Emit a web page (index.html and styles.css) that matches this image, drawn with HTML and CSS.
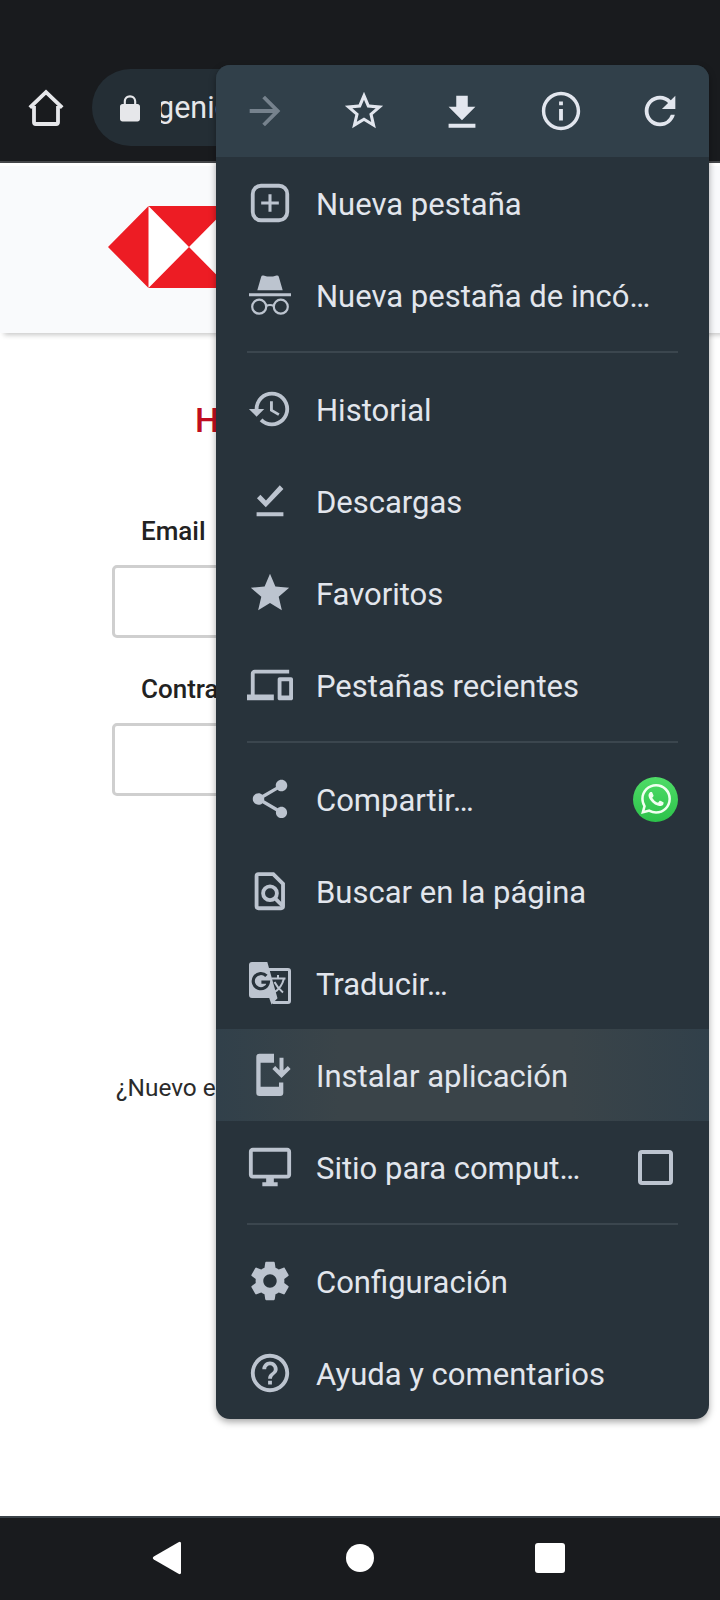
FILE: index.html
```html
<!DOCTYPE html>
<html lang="es">
<head>
<meta charset="utf-8">
<title>Menú del navegador</title>
<link rel="stylesheet" href="styles.css">
</head>
<body>
<div class="screen">
  <header class="toolbar">
    <svg class="home" viewBox="0 0 36 38"><path d="M1.8 18.6 18 3.2l16.200 15.400M6 17v16.200q0 1.800 1.800 1.800h20.400q1.800 0 1.800-1.800V17" fill="none" stroke="currentColor" stroke-width="3.800"/></svg>
    <div class="omnibox">
      <svg class="lock" viewBox="0 0 24 24"><path d="M18 8h-1V6c0-2.760-2.240-5-5-5S7 3.240 7 6v2H6c-1.100 0-2 .9-2 2v10c0 1.100.9 2 2 2h12c1.100 0 2-.9 2-2V10c0-1.100-.9-2-2-2zM8.700 8V6a3.300 3.300 0 0 1 6.600 0v2z"/></svg>
      <div class="url"><span>genic</span></div>
    </div>
  </header>
  <main class="page">
    <div class="brand">
      <svg class="logo" viewBox="0 0 162 82"><path fill="#fff" d="M40.500 0h81v82h-81z"/><path fill="#ed1c24" d="M40.500 0v82L0 41zM121.500 0v82L162 41zM40.500 0h81L81 41zM40.500 82h81L81 41z"/></svg>
    </div>
    <h1 class="title">H</h1>
    <form class="login">
      <label class="label">Email</label>
      <div class="field"></div>
      <label class="label">Contra</label>
      <div class="field"></div>
    </form>
    <p class="signup">¿Nuevo e</p>
  </main>
  <nav class="sysnav">
    <svg class="sys" viewBox="0 0 32 36"><path fill="#fff" d="M2.800 16.500 27.500 2.300Q30 1 30 3.500v29q0 2.500-2.500 1.200L2.800 19.500q-2-1.500 0-3z"/></svg>
    <span class="sys-home"></span>
    <span class="sys-recent"></span>
  </nav>

  <div class="menu">
    <div class="actions">
      <svg class="ic dim" viewBox="0 0 24 24"><path d="m12 4-1.410 1.410L16.170 11H4v2h12.170l-5.580 5.590L12 20l8-8z"/></svg>
      <svg class="ic" viewBox="0 0 24 24"><path d="m22 9.240-7.190-.62L12 2 9.190 8.630 2 9.240l5.460 4.730L5.820 21 12 17.270 18.180 21l-1.630-7.030L22 9.240zM12 15.400l-3.760 2.270 1-4.280-3.320-2.880 4.380-.38L12 6.100l1.710 4.040 4.380.38-3.320 2.880 1 4.280L12 15.400z"/></svg>
      <svg class="ic" viewBox="0 0 24 24"><path d="M19 9.800h-4V4H9v5.800H5l7 7zM5 18.600v2.200h14v-2.200z"/></svg>
      <svg class="ic" viewBox="0 0 24 24"><path d="M11 7h2v2h-2zm0 4h2v6h-2zm1-9C6.480 2 2 6.480 2 12s4.480 10 10 10 10-4.480 10-10S17.520 2 12 2zm0 18.200c-4.500 0-8.200-3.700-8.200-8.200S7.500 3.800 12 3.800s8.200 3.700 8.200 8.200-3.700 8.200-8.200 8.200z"/></svg>
      <svg class="ic" viewBox="0 0 24 24"><path d="M17.650 6.350A7.958 7.958 0 0 0 12 4c-4.420 0-7.990 3.580-7.990 8s3.570 8 7.990 8c3.730 0 6.840-2.550 7.730-6h-2.080A5.990 5.990 0 0 1 12 18c-3.310 0-6-2.690-6-6s2.690-6 6-6c1.660 0 3.140.69 4.220 1.780L13 11h7V4l-2.350 2.350z"/></svg>
    </div>

    <div class="group">
      <div class="item">
        <svg class="ic" viewBox="0 0 24 24"><rect x="3" y="3" width="18" height="18" rx="4.300" fill="none" stroke="currentColor" stroke-width="2"/><path d="M11.200 7.400h1.600v3.800h3.800v1.600h-3.800v3.800h-1.600v-3.800H7.400v-1.600h3.800z"/></svg>
        <span class="text">Nueva pestaña</span>
      </div>
      <div class="item">
        <svg class="ic" viewBox="0 0 46 46"><path d="M10.300 18.200 14.200 4.700q.5-1.700 2.300-1.200l3.500.9h6l3.500-.9q1.800-.5 2.300 1.200l3.900 13.500zM2 21.300h42v2.900H2z"/><g fill="none" stroke="currentColor" stroke-width="2.200"><circle cx="12.200" cy="34.700" r="7"/><circle cx="33.800" cy="34.700" r="7"/><path d="M19 34q4-2 8 0"/></g></svg>
        <span class="text">Nueva pestaña de incó…</span>
      </div>
    </div>
    <div class="group">
      <div class="item">
        <svg class="ic" viewBox="0 0 24 24"><path d="M13 3a9 9 0 0 0-9 9H1l3.890 3.890.07.140L9 12H6c0-3.870 3.130-7 7-7s7 3.130 7 7-3.130 7-7 7c-1.930 0-3.680-.79-4.940-2.060l-1.420 1.420A8.954 8.954 0 0 0 13 21a9 9 0 0 0 0-18zm-1 5v5l4.280 2.540.72-1.210-3.500-2.080V8H12z"/></svg>
        <span class="text">Historial</span>
      </div>
      <div class="item">
        <svg class="ic" viewBox="0 0 24 24"><path d="M5.200 10.600 7 8.800l2.900 2.900L17.100 3.800l1.900 1.900L9.800 15.200zM5 17.900h14V20H5z"/></svg>
        <span class="text">Descargas</span>
      </div>
      <div class="item">
        <svg class="ic" viewBox="0 0 24 24"><path d="M12 17.270 18.180 21l-1.640-7.030L22 9.240l-7.190-.61L12 2 9.190 8.630 2 9.240l5.460 4.730L5.820 21z"/></svg>
        <span class="text">Favoritos</span>
      </div>
      <div class="item">
        <svg class="ic" viewBox="0 0 24 24"><path d="M4 6h18V4H4c-1.100 0-2 .9-2 2v11H0v3h14v-3H4V6zm19 2h-6c-.55 0-1 .45-1 1v10c0 .55.45 1 1 1h6c.55 0 1-.45 1-1V9c0-.55-.45-1-1-1zm-1 9.500h-4V10h4v7.500z"/></svg>
        <span class="text">Pestañas recientes</span>
      </div>
    </div>
    <div class="group">
      <div class="item">
        <svg class="ic" viewBox="0 0 24 24"><path d="M18 16.080c-.76 0-1.440.3-1.960.77L8.910 12.700c.05-.23.09-.46.09-.7s-.04-.47-.09-.7l7.050-4.110c.54.5 1.250.81 2.040.81 1.660 0 3-1.340 3-3s-1.340-3-3-3-3 1.340-3 3c0 .24.04.47.09.7L8.040 9.810C7.500 9.310 6.790 9 6 9c-1.660 0-3 1.340-3 3s1.340 3 3 3c.79 0 1.500-.31 2.040-.81l7.120 4.160c-.05.21-.08.43-.08.65 0 1.610 1.310 2.920 2.920 2.920s2.920-1.310 2.920-2.920-1.310-2.920-2.920-2.920z"/></svg>
        <span class="text">Compartir…</span>
        <span class="whatsapp"><svg viewBox="0 0 24 24"><path d="M17.472 14.382c-.297-.149-1.758-.867-2.030-.967-.273-.099-.471-.148-.67.150-.197.297-.767.966-.94 1.164-.173.199-.347.223-.644.075-.297-.15-1.255-.463-2.390-1.475-.883-.788-1.480-1.761-1.653-2.059-.173-.297-.018-.458.130-.606.134-.133.298-.347.446-.52.149-.174.198-.298.298-.497.099-.198.050-.371-.025-.52-.075-.149-.669-1.612-.916-2.207-.242-.579-.487-.5-.669-.51-.173-.008-.371-.01-.57-.01-.198 0-.52.074-.792.372-.272.297-1.040 1.016-1.040 2.479 0 1.462 1.065 2.875 1.213 3.074.149.198 2.096 3.200 5.077 4.487.709.306 1.262.489 1.694.625.712.227 1.360.195 1.871.118.571-.085 1.758-.719 2.006-1.413.248-.694.248-1.289.173-1.413-.074-.124-.272-.198-.57-.347m-5.421 7.403h-.004a9.870 9.870 0 0 1-5.031-1.378l-.361-.214-3.741.982.998-3.648-.235-.374a9.860 9.860 0 0 1-1.510-5.260c.001-5.450 4.436-9.884 9.888-9.884 2.640 0 5.122 1.030 6.988 2.898a9.825 9.825 0 0 1 2.893 6.994c-.003 5.450-4.437 9.884-9.885 9.884m8.413-18.297A11.815 11.815 0 0 0 12.050 0C5.495 0 .16 5.335.157 11.892c0 2.096.547 4.142 1.588 5.945L.057 24l6.305-1.654a11.882 11.882 0 0 0 5.683 1.448h.005c6.554 0 11.890-5.335 11.893-11.893a11.821 11.821 0 0 0-3.480-8.413z"/></svg></span>
      </div>
      <div class="item">
        <svg class="ic" viewBox="0 0 24 24"><g fill="none" stroke="currentColor" stroke-width="2"><path d="M6 3.200h7.700L18.800 8.300v11.700q0 1-1 1H6q-1 0-1-1V4.200q0-1 1-1z"/><circle cx="12" cy="13.200" r="3.600"/><path d="m14.500 15.700 4 4"/></g></svg>
        <span class="text">Buscar en la página</span>
      </div>
      <div class="item">
        <svg class="ic" viewBox="0 0 46 46"><path d="M20 9.500h21q1.500 0 1.500 1.500v30q0 1.500-1.500 1.500H25.500" fill="none" stroke="currentColor" stroke-width="3"/><path d="M5 2h15.300l10.200 36.200-6 6.300-2.300-6.500H5q-3 0-3-3V5q0-3 3-3z"/><path d="M19.400 15.900a7.600 7.600 0 1 0 2 6.200h-7" fill="none" stroke="#28333b" stroke-width="3.200"/><path d="M24.500 18.500h14M31 15v3.500M37 18.500q-2.500 9.500-10 14M27.500 22q3 6 8.500 10.500" fill="none" stroke="currentColor" stroke-width="2"/></svg>
        <span class="text">Traducir…</span>
      </div>
      <div class="item pressed">
        <svg class="ic" viewBox="0 0 46 46"><path d="M27 1.700H12.500q-3.200 0-3.200 3.200v35.900q0 3.200 3.200 3.200h20.600q3.200 0 3.200-3.200V30.500H32v4.200H13.600V10.700H27z"/><path d="M34.500 5.700v17M26.800 15.500l7.700 7.700 7.700-7.700" fill="none" stroke="currentColor" stroke-width="4"/></svg>
        <span class="text">Instalar aplicación</span>
      </div>
      <div class="item">
        <svg class="ic" viewBox="0 0 24 24"><path d="M21 2H3c-1.100 0-2 .9-2 2v12c0 1.100.9 2 2 2h7v2H8v2h8v-2h-2v-2h7c1.100 0 2-.9 2-2V4c0-1.100-.9-2-2-2zm0 14H3V4h18v12z"/></svg>
        <span class="text">Sitio para comput…</span>
        <span class="checkbox"></span>
      </div>
    </div>
    <div class="group">
      <div class="item">
        <svg class="ic" viewBox="0 0 24 24"><path d="M19.430 12.980c.04-.32.07-.64.07-.98s-.03-.66-.07-.98l2.110-1.650c.19-.15.24-.42.12-.64l-2-3.460c-.12-.22-.39-.3-.61-.22l-2.490 1c-.52-.4-1.080-.73-1.690-.98l-.38-2.650C14.460 2.180 14.250 2 14 2h-4c-.25 0-.46.18-.49.42l-.38 2.650c-.61.25-1.170.59-1.690.98l-2.490-1c-.23-.09-.49 0-.61.22l-2 3.460c-.13.22-.07.49.12.64l2.110 1.650c-.04.32-.07.65-.07.98s.03.66.07.98l-2.110 1.650c-.19.15-.24.42-.12.64l2 3.460c.12.22.39.3.61.22l2.490-1c.52.4 1.080.73 1.690.98l.38 2.650c.03.24.24.42.49.42h4c.25 0 .46-.18.49-.42l.38-2.650c.61-.25 1.170-.59 1.690-.98l2.490 1c.23.09.49 0 .61-.22l2-3.460c.12-.22.07-.49-.12-.64l-2.110-1.650zM12 15.500c-1.930 0-3.500-1.570-3.500-3.500s1.570-3.500 3.500-3.500 3.500 1.570 3.500 3.500-1.570 3.500-3.500 3.500z"/></svg>
        <span class="text">Configuración</span>
      </div>
      <div class="item">
        <svg class="ic" viewBox="0 0 24 24"><path d="M11 18h2v-2h-2v2zm1-16C6.480 2 2 6.480 2 12s4.480 10 10 10 10-4.480 10-10S17.520 2 12 2zm0 18c-4.410 0-8-3.590-8-8s3.590-8 8-8 8 3.590 8 8-3.590 8-8 8zm0-14c-2.210 0-4 1.790-4 4h2c0-1.100.9-2 2-2s2 .9 2 2c0 2-3 1.750-3 5h2c0-2.250 3-2.500 3-5 0-2.210-1.790-4-4-4z"/></svg>
        <span class="text">Ayuda y comentarios</span>
      </div>
    </div>
  </div>
</div>
</body>
</html>
```
FILE: styles.css
```css
* { box-sizing: border-box; }
body { margin: 0; font-family: Roboto, "Liberation Sans", sans-serif; }
svg { display: block; fill: currentColor; flex: none; }

.screen {
  position: relative;
  width: 720px;
  height: 1600px;
  overflow: hidden;
  display: flex;
  flex-direction: column;
  background: #fff;
}

/* Browser toolbar */
.toolbar {
  height: 163px;
  flex: none;
  display: flex;
  align-items: flex-start;
  padding: 69px 0 0 28px;
  gap: 28px;
  background: #191b1e;
  border-bottom: 2px solid #46484b;
  color: #e6e7ea;
}
.home { width: 36px; height: 38px; margin-top: 20px; }
.omnibox {
  flex: none;
  width: 600px;
  height: 77px;
  display: flex;
  align-items: center;
  padding-left: 23px;
  border-radius: 39px;
  background: #242e35;
}
.lock { width: 30px; height: 30px; margin-top: 3px; }
.url {
  margin-left: 16px;
  overflow: hidden;
  font-size: 30.500px;
  line-height: 40px;
}
.url span { margin-left: -4px; }

/* Web page */
.page { flex: 1; display: flex; flex-direction: column; }
.brand {
  height: 170px;
  flex: none;
  padding: 40px 0 0 108px;
  border-top: 3px solid #fff;
  background: #f9fafc;
  box-shadow: 4px 2px 5px rgba(0, 0, 0, .22);
}
.logo { width: 162px; height: 82px; }
.title {
  margin: 67px 0 0 195px;
  font-size: 34px;
  line-height: 40px;
  font-weight: 500;
  color: #c00d20;
}
.login { padding: 76px 0 0 112px; }
.label {
  display: block;
  height: 49px;
  padding-left: 29px;
  font-size: 26px;
  line-height: 30px;
  font-weight: 500;
  color: #222;
}
.field {
  width: 496px;
  height: 73px;
  margin-bottom: 36px;
  border: 3px solid #cfcfcf;
  border-radius: 5px;
}
.signup {
  margin: 241px 0 0 116px;
  font-size: 24.400px;
  line-height: 30px;
  color: #2b2b2b;
}

/* System navigation */
.sysnav {
  height: 84px;
  flex: none;
  display: flex;
  align-items: center;
  padding: 0 0 2px 151px;
  border-top: 2px solid #3a4248;
  background: #191b1e;
}
.sys { width: 32px; height: 36px; }
.sys-home { width: 28px; height: 28px; margin-left: 163px; border-radius: 50%; background: #fff; }
.sys-recent { width: 30px; height: 30px; margin-left: 161px; border-radius: 3px; background: #fff; }

/* Overflow menu */
.menu {
  position: absolute;
  left: 216px;
  top: 65px;
  width: 493px;
  height: 1354px;
  overflow: hidden;
  border-radius: 14px;
  background: #28333b;
  box-shadow: 0 3px 7px rgba(0, 0, 0, .35);
  color: #bcc4cf;
}
.actions {
  height: 92px;
  display: grid;
  grid-template-columns: repeat(5, 1fr);
  place-items: center;
  background: #31404a;
  color: #e2e6ee;
}
.ic { width: 46px; height: 46px; }
.dim { color: #76828d; }
.group + .group::before {
  content: "";
  display: block;
  height: 2px;
  margin: 10px 31px;
  background: #3b464e;
}
.item {
  height: 92px;
  display: flex;
  align-items: center;
  padding: 0 31px;
}
.text {
  flex: 1;
  padding: 4px 0 0 23px;
  font-size: 31px;
  line-height: 40px;
  white-space: nowrap;
  color: #e2e6ed;
}
.pressed {
  background: linear-gradient(90deg, #31404a, #3a4449 25%, #3a4449 72%, #31404a);
}
.whatsapp {
  width: 45px;
  height: 45px;
  display: grid;
  place-items: center;
  border-radius: 50%;
  background: linear-gradient(#4fdc67, #2cc24a);
  color: #f0fff0;
}
.whatsapp svg { width: 30px; height: 30px; }
.checkbox {
  width: 35px;
  height: 35px;
  margin-right: 5px;
  border: 4px solid #bcc4cf;
  border-radius: 4px;
}
```
